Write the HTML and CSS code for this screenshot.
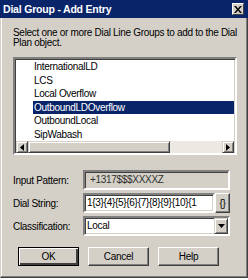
FILE: index.html
```html
<!DOCTYPE html>
<html lang="en">
  <head>
    <meta charset="UTF-8" />
    <title>Dial Group - Add Entry</title>
    <link rel="stylesheet" href="styles.css">
  </head>
  <body>
    <div class="window">
      <!-- Title bar -->
      <div class="titlebar">
        <span class="title">Dial Group - Add Entry</span>
        <span class="close-btn">
          <svg width="8" height="7" viewBox="0 0 8 7">
            <path d="M0 0h2l2 2.5L6 0h2L5 3.5 8 7H6L4 4.5 2 7H0l3-3.5z" fill="#000" />
          </svg>
        </span>
      </div>

      <div class="content">
        <p class="intro">Select one or more Dial Line Groups to add to the Dial Plan object.</p>

        <!-- Dial line group list -->
        <div class="listbox">
          <ul class="items">
            <li>InternationalLD</li>
            <li>LCS</li>
            <li>Local Overflow</li>
            <li class="selected">OutboundLDOverflow</li>
            <li>OutboundLocal</li>
            <li>SipWabash</li>
          </ul>
          <div class="hscroll">
            <span class="arrow">
              <svg width="4" height="7" viewBox="0 0 4 7"><path d="M4 0v7L0 3.5z" fill="#000" /></svg>
            </span>
            <span class="thumb"></span>
            <span class="track"></span>
            <span class="arrow">
              <svg width="4" height="7" viewBox="0 0 4 7"><path d="M0 0v7l4-3.5z" fill="#000" /></svg>
            </span>
          </div>
        </div>

        <!-- Form fields -->
        <div class="form">
          <div class="row">
            <label>Input Pattern:</label>
            <div class="field disabled">+1317$$$XXXXZ</div>
          </div>
          <div class="row">
            <label>Dial String:</label>
            <div class="field grow">1{3}{4}{5}{6}{7}{8}{9}{10}{1</div>
            <span class="small-btn">{}</span>
          </div>
          <div class="row">
            <label>Classification:</label>
            <div class="field combo">
              <span class="combo-text">Local</span>
              <span class="drop-btn">
                <svg width="7" height="4" viewBox="0 0 7 4"><path d="M0 0h7L3.5 4z" fill="#000" /></svg>
              </span>
            </div>
          </div>
        </div>

        <!-- Buttons -->
        <div class="buttons">
          <span class="btn default">OK</span>
          <span class="btn">Cancel</span>
          <span class="btn">Help</span>
        </div>
      </div>
    </div>
  </body>
</html>
```

FILE: styles.css
```css
* {
  margin: 0;
  padding: 0;
  box-sizing: border-box;
  font-family: "Liberation Sans", Arial, sans-serif;
}

body {
  background: #ffffff;
  width: 248px;
  height: 280px;
  font-size: 10px;
  letter-spacing: -0.3px;
  color: #000;
}

.window {
  width: 248px;
  height: 278px;
  background: #d4d0c8;
  border-left: 1px solid #d4d0c8;
  border-right: 1px solid #404040;
  border-bottom: 1px solid #404040;
  box-shadow: inset -1px -1px 0 #808080, inset 1px 0 0 #ffffff;
  display: flex;
  flex-direction: column;
}

.titlebar {
  height: 18px;
  margin: 0 -1px 0 -1px;
  background: #0a246a;
  display: flex;
  align-items: center;
  justify-content: space-between;
  padding: 0 4px 0 3px;
}

.title {
  color: #ffffff;
  font-weight: bold;
  font-size: 10.5px;
  letter-spacing: -0.2px;
}

.close-btn {
  width: 12px;
  height: 12px;
  background: #d4d0c8;
  border: 1px solid;
  border-color: #ffffff #404040 #404040 #ffffff;
  display: flex;
  align-items: center;
  justify-content: center;
}

.content {
  padding: 10px 9px 0 12px;
}

.intro {
  line-height: 10px;
  width: 226px;
  margin-bottom: 9px;
}

/* List box */
.listbox {
  width: 224px;
  height: 98px;
  background: #ffffff;
  border: 2px solid;
  border-color: #808080 #ffffff #ffffff #808080;
  box-shadow: inset 1px 1px 0 #404040, inset -1px -1px 0 #d4d0c8;
  display: flex;
  flex-direction: column;
}

.items {
  list-style: none;
  flex: 1;
  padding: 1px 1px 0 18px;
}

.items li {
  height: 13.5px;
  line-height: 13.5px;
  padding-left: 1px;
}

.items li.selected {
  background: #0a246a;
  color: #ffffff;
}

.hscroll {
  height: 12px;
  margin: 0 1px 1px 1px;
  display: flex;
  background: #ece9e2;
}

.arrow {
  width: 12px;
  height: 12px;
  background: #d4d0c8;
  border: 1px solid;
  border-color: #d4d0c8 #404040 #404040 #d4d0c8;
  box-shadow: inset 1px 1px 0 #ffffff, inset -1px -1px 0 #808080;
  display: flex;
  align-items: center;
  justify-content: center;
}

.thumb {
  width: 142px;
  background: #d4d0c8;
  border: 1px solid;
  border-color: #d4d0c8 #404040 #404040 #d4d0c8;
  box-shadow: inset 1px 1px 0 #ffffff, inset -1px -1px 0 #808080;
}

.track {
  flex: 1;
}

/* Form */
.form {
  margin-top: 15px;
  display: flex;
  flex-direction: column;
  gap: 3px;
}

.row {
  display: flex;
  align-items: center;
  height: 20px;
}

.row label {
  width: 70px;
  flex-shrink: 0;
}

.field {
  width: 147px;
  height: 20px;
  background: #ffffff;
  border: 2px solid;
  border-color: #808080 #ffffff #ffffff #808080;
  box-shadow: inset 1px 1px 0 #404040, inset -1px -1px 0 #d4d0c8;
  padding: 0 3px;
  line-height: 16px;
  white-space: nowrap;
  overflow: hidden;
}

.field.disabled {
  background: #d4d0c8;
  color: #303030;
  padding-left: 5px;
}

.field.grow {
  width: 132px;
  padding-left: 2px;
}

.small-btn {
  width: 15px;
  height: 20px;
  background: #d4d0c8;
  border: 1px solid;
  border-color: #ffffff #404040 #404040 #ffffff;
  box-shadow: inset -1px -1px 0 #808080;
  display: flex;
  align-items: center;
  justify-content: center;
  font-size: 10px;
}

.field.combo {
  display: flex;
  align-items: center;
  justify-content: space-between;
  padding: 0 0 0 2px;
}

.drop-btn {
  width: 14px;
  height: 16px;
  background: #d4d0c8;
  border: 1px solid;
  border-color: #d4d0c8 #404040 #404040 #d4d0c8;
  box-shadow: inset 1px 1px 0 #ffffff, inset -1px -1px 0 #808080;
  display: flex;
  align-items: center;
  justify-content: center;
}

/* Buttons */
.buttons {
  margin-top: 11px;
  padding-left: 5px;
  display: flex;
  gap: 9px;
}

.btn {
  width: 61px;
  height: 19px;
  background: #d4d0c8;
  border: 1px solid;
  border-color: #ffffff #404040 #404040 #ffffff;
  box-shadow: inset -1px -1px 0 #808080;
  display: flex;
  align-items: center;
  justify-content: center;
}

.btn.default {
  border: 1px solid #000;
  box-shadow: inset 1px 1px 0 #ffffff, inset -2px -2px 0 #404040;
}
```
